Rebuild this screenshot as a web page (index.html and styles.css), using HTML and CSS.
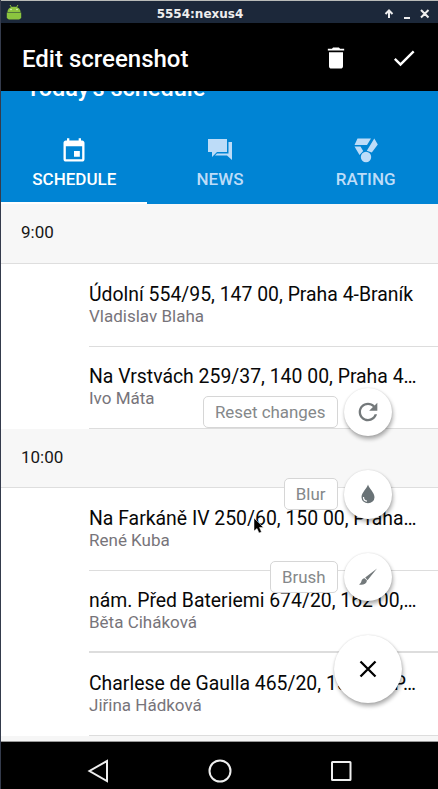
FILE: index.html
```html
<!DOCTYPE html>
<html lang="cs">
<head>
<meta charset="utf-8">
<title>Edit screenshot</title>
<link rel="stylesheet" href="styles.css">
</head>
<body>
<div class="window">
  <header class="titlebar">
    <svg class="android" width="16" height="17" viewBox="0 0 16 17"><path d="M4 1l2 3M12 1l-2 3" stroke="#8ec63f" stroke-width="1"/><path d="M1.500 8C1.500 1 14.500 1 14.500 8z" fill="#8ec63f"/><path d="M.8 8.500h14.400V14l-2 1.500H2.800L.8 14z" fill="#8bc53f"/><circle cx="5" cy="5.500" r=".8" fill="#e7f4d0"/><circle cx="11" cy="5.500" r=".8" fill="#e7f4d0"/></svg>
    <span class="window-name">5554:nexus4</span>
    <svg class="controls" width="46" height="12" viewBox="0 0 46 12" fill="none" stroke="#eee" stroke-width="2"><path d="M5 10V3M1.500 6L5 2.500 8.500 6M20 10h6M37 2l7.500 7.500M44.500 2L37 9.500"/></svg>
  </header>
  <div class="appbar">
    <h1>Edit screenshot</h1>
    <svg class="trash" width="28" height="28" viewBox="0 0 24 24" fill="#fff"><path d="M6 19c0 1.100.9 2 2 2h8c1.100 0 2-.9 2-2V7H6v12zM19 4h-3.500l-1-1h-5l-1 1H5v1.500h14V4z"/></svg>
    <svg class="check" width="28" height="28" viewBox="0 0 24 24" fill="#fff"><path d="M9 16.170L4.830 12l-1.420 1.410L9 19 21 7l-1.410-1.410z"/></svg>
  </div>
  <div class="hero"><div class="hero-title"><span>Today's schedule</span></div>
    <nav class="tabs">
      <div class="tab active"><svg width="28" height="28" viewBox="0 0 24 24" fill="currentColor"><path d="M17 12h-5v5h5v-5zM16 1v2H8V1H6v2H5c-1.110 0-1.990.9-1.990 2L3 19c0 1.100.890 2 2 2h14c1.100 0 2-.9 2-2V5c0-1.100-.9-2-2-2h-1V1h-2zm3 18H5V8h14v11z"/></svg><span>SCHEDULE</span></div>
      <div class="tab"><svg width="28" height="28" viewBox="0 0 28 28" fill="currentColor"><path d="M2 2h19v13H11l-5 5v-5H2zM22.500 5H26v18l-5-4.500H9l2-2h11.500z"/></svg><span>NEWS</span></div>
      <div class="tab"><svg width="28" height="28" viewBox="0 0 28 28" fill="currentColor"><path d="M5.500 1.500H19l-4 6.500H2.500zM22.300 1.500l3.500 6-6 8-5-1.800zM2.500 9.500h6l2.700 4.500-3.700 4z"/><circle cx="14" cy="20" r="5.200"/></svg><span>RATING</span></div>
    </nav>
  </div>
  <main class="schedule">
    <h2>9:00</h2>
    <article><b>Údolní 554/95, 147 00, Praha 4-Braník</b><p>Vladislav Blaha</p></article>
    <article><b>Na Vrstvách 259/37, 140 00, Praha 4…</b><p>Ivo Máta</p></article>
    <h2 class="later">10:00</h2>
    <article><b>Na Farkáně IV 250/60, 150 00, Praha…</b><p>René Kuba</p></article>
    <article class="strong"><b>nám. Před Bateriemi 674/20, 162 00,…</b><p>Běta Ciháková</p></article>
    <article><b>Charlese de Gaulla 465/20, 155 00, P…</b><p>Jiřina Hádková</p></article>
  </main>
  <footer class="navbar">
    <svg width="24" height="26" viewBox="0 0 24 26"><path d="M21 3v20L3.500 13z"/></svg>
    <svg width="24" height="26" viewBox="0 0 24 26"><circle cx="12" cy="13" r="10.500"/></svg>
    <svg width="24" height="26" viewBox="0 0 24 26"><rect x="3" y="4" width="18.500" height="18" rx=".5"/></svg>
  </footer>
  <div class="actions">
    <div class="action"><span class="label">Reset changes</span><button class="fab"><svg width="28" height="28" viewBox="0 0 24 24" fill="#74797b"><path d="M17.650 6.350C16.200 4.900 14.210 4 12 4c-4.420 0-7.990 3.580-7.990 8s3.570 8 7.990 8c3.730 0 6.840-2.550 7.730-6h-2.080c-.820 2.330-3.040 4-5.650 4-3.310 0-6-2.690-6-6s2.690-6 6-6c1.660 0 3.140.690 4.220 1.780L13 11h7V4l-2.350 2.350z"/></svg></button></div>
    <div class="action"><span class="label">Blur</span><button class="fab"><svg width="20" height="22" viewBox="0 0 20 22"><path d="M10 1.500C9 5.500 3.500 9.500 3.500 14.200a6.500 6 0 0 0 13 0C16.500 9.500 11 5.500 10 1.500z" fill="#697276"/><path d="M5.500 14c0 2.300 1.500 4 3.500 4.200" fill="none" stroke="#fff" stroke-width="1.200"/></svg></button></div>
    <div class="action"><span class="label">Brush</span><button class="fab"><svg width="22" height="22" viewBox="0 0 22 22" fill="#73797b"><path d="M20 2.500L8.200 11.500l2.300 2.700zM7.700 12.300c-2 0-2.800 1.400-3.300 2.900-.3 1.300-1 2.300-2.400 3.300 3.500.8 7.500-.2 8-3.900z"/></svg></button></div>
    <button class="fab main"><svg width="18" height="18" viewBox="0 0 18 18"><path d="M1.500 1.500l15 15M16.500 1.500l-15 15" stroke="#000" stroke-width="2.300"/></svg></button>
  </div>
  <svg class="cursor" width="12" height="18" viewBox="0 0 12 18"><path d="M1 1v13l3-2.500L6 16l2.500-1-2-4.500h4z" fill="#000" stroke="#fff" stroke-width=".5"/></svg>
</div>
</body>
</html>
```
FILE: styles.css
```css
* { box-sizing: border-box; }
body { margin: 0; font-family: Roboto, sans-serif; background: #fff; }
.window { position: relative; width: 438px; height: 789px; overflow: hidden; border-left: 1px solid #343b4c; display: flex; flex-direction: column; }
.titlebar { height: 23px; flex: none; background: #1c283a; border-top: 1px solid #b9bbb8; display: grid; grid-template-columns: 21px 1fr 60px; align-items: center; }
.android { margin-left: 5px; }
.window-name { color: #eee; font: bold 12px "DejaVu Sans", sans-serif; text-align: center; padding-top: 3px; }
.controls { margin-top: 3px; margin-left: 6px; }
.appbar { height: 68px; flex: none; background: #000; color: #fff; display: flex; align-items: center; padding: 3px 20px 0 21px; }
h1 { margin: 0; flex: 1; font-size: 24px; font-weight: 500; white-space: nowrap; padding-top: 1px; }
.trash { margin: -2px 40px 0 0; }
.check { margin-top: -2px; }
.hero { height: 113px; flex: none; background: #0084d4; color: #fff; }
.hero-title { height: 33px; overflow: hidden; padding-left: 25px; }
.hero-title span { display: block; margin-top: -17px; font-size: 23.500px; line-height: 28px; font-weight: 500; }
.tabs { display: grid; grid-template-columns: repeat(3, 1fr); height: 80px; }
.tab { color: #bddcf8; display: flex; flex-direction: column; align-items: center; padding-top: 13px; font-size: 17px; font-weight: 500; padding-left: 1px; }
.tab svg { flex: none; }
.tab span { line-height: 22px; margin-top: 3px; }
.tab.active { color: #fff; border-bottom: 2px solid #fff; }
.schedule { height: 537px; flex: none; background: #f6f6f6; }
h2 { margin: 0; height: 60px; padding: 18px 20px 0; border-bottom: 1px solid #dedede; background: #f7f7f7; color: #161616; font-size: 17px; line-height: 21px; font-weight: 400; }
h2.later { height: 59px; }
article { height: 82.500px; padding: 17.500px 20px 0 88px; background: linear-gradient(#ddd, #ddd) 88px 100% / 100% 1px no-repeat #fff; white-space: nowrap; }
article.strong { background-size: 100% 2px; }
article b { display: block; font-weight: 400; font-size: 19.400px; line-height: 26px; color: #080808; }
article p { margin: -2px 0 0; font-size: 17px; line-height: 20px; color: #77747a; }
.navbar { flex: none; height: 48px; background: #000; display: flex; justify-content: center; gap: 97.500px; padding-top: 17px; border-top: 1px solid #999; }
.navbar svg { fill: none; stroke: #eee; stroke-width: 2; flex: none; margin-top: -1px; }
.actions { position: absolute; right: 36.500px; top: 387.500px; display: flex; flex-direction: column; align-items: flex-end; gap: 34px; }
.action { display: flex; align-items: center; gap: 6px; margin-right: 9.500px; }
.label { height: 32px; padding: 0 11px; border: 1px solid #d6d6d6; border-radius: 5px; background: #fff; color: #85888a; font-size: 16.900px; line-height: 30px; }
.fab { display: flex; align-items: center; justify-content: center; width: 48.500px; height: 48.500px; padding: 0; border: 0; border-radius: 50%; background: #fff; box-shadow: 1px 3px 4px rgba(0,0,0,.33), 0 0 2px rgba(0,0,0,.12); }
.fab.main { width: 68px; height: 68px; }
.cursor { position: absolute; left: 252px; top: 517px; }
```
